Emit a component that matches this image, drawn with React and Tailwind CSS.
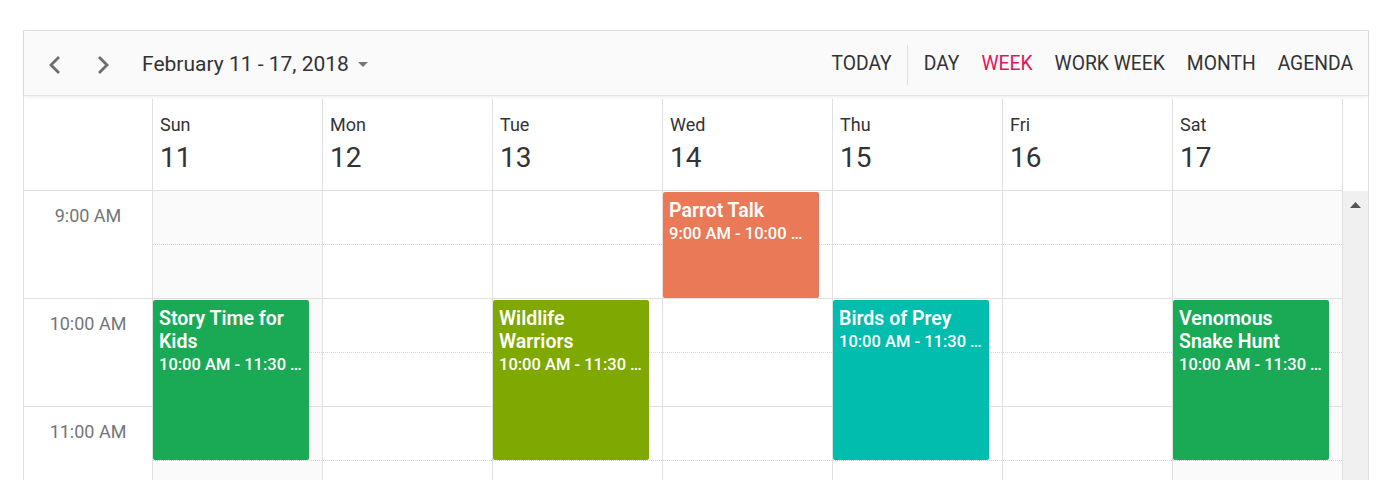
import React from "react";

const days = [
  { name: "Sun", date: "11", weekend: true },
  { name: "Mon", date: "12" },
  { name: "Tue", date: "13" },
  { name: "Wed", date: "14" },
  { name: "Thu", date: "15" },
  { name: "Fri", date: "16" },
  { name: "Sat", date: "17", weekend: true },
];

const events = {
  0: [{ title: "Story Time for Kids", time: "10:00 AM - 11:30 AM", start: 10, dur: 1.5, color: "bg-[#1aaa55]" }],
  2: [{ title: "Wildlife Warriors", time: "10:00 AM - 11:30 AM", start: 10, dur: 1.5, color: "bg-[#7fa900]" }],
  3: [{ title: "Parrot Talk", time: "9:00 AM - 10:00 AM", start: 9, dur: 1, color: "bg-[#ea7a57]" }],
  4: [{ title: "Birds of Prey", time: "10:00 AM - 11:30 AM", start: 10, dur: 1.5, color: "bg-[#00bdae]" }],
  6: [{ title: "Venomous Snake Hunt", time: "10:00 AM - 11:30 AM", start: 10, dur: 1.5, color: "bg-[#1aaa55]" }],
};

const hours = ["9:00 AM", "10:00 AM", "11:00 AM", "12:00 PM"];

function Chevron({ dir }) {
  return (
    <svg width="14" height="20" viewBox="0 0 14 20">
      <polyline
        points={dir === "left" ? "12,2 4,10 12,18" : "2,2 10,10 2,18"}
        fill="none"
        stroke="#6e6e6e"
        strokeWidth="2.8"
      />
    </svg>
  );
}

function Event({ ev }) {
  const top = 1 + (ev.start - 9) * 108;
  const height = ev.dur * 108 - 2;
  return (
    <div
      className={`absolute left-0 w-[156px] rounded-[2px] ${ev.color} text-white pl-[6px] pr-[6px] pt-[7px]`}
      style={{ top, height }}
    >
      <div className="text-[19.5px] leading-[23px] font-semibold">{ev.title}</div>
      <div className="text-[16.5px] leading-[23px] font-medium whitespace-nowrap overflow-hidden text-ellipsis">
        {ev.time}
      </div>
    </div>
  );
}

export default function App() {
  return (
    <div className="h-[480px] overflow-hidden bg-white pt-[30px] pl-[23px] font-['Roboto','Liberation_Sans',sans-serif] text-[#333]">
      <div className="w-[1346px] border border-[#e0e0e0]">
        {/* Toolbar */}
        <div className="relative z-10 h-[65px] pt-[3px] bg-[#fafafa] border-b border-[#e3e3e3] shadow-[0_1px_3px_rgba(0,0,0,0.08)] flex items-center justify-between">
          <div className="flex items-center pl-[10px]">
            <div className="w-[40px] h-[40px] flex items-center justify-center">
              <Chevron dir="left" />
            </div>
            <div className="ml-[10px] w-[40px] h-[40px] flex items-center justify-center">
              <Chevron dir="right" />
            </div>
            <div className="ml-[18px] text-[21px] text-[#333]">February 11 - 17, 2018</div>
            <svg className="ml-[9px]" width="10" height="5" viewBox="0 0 10 5">
              <polygon points="0,0 10,0 5,5" fill="#757575" />
            </svg>
          </div>
          <div className="flex items-center pr-[4px] text-[19.3px] text-[#333]">
            <div className="px-[11px]">TODAY</div>
            <div className="ml-[4px] mr-[5px] w-px h-[40px] bg-[#e0e0e0]" />
            <div className="px-[11px]">DAY</div>
            <div className="px-[11px] text-[#e3165b]">WEEK</div>
            <div className="px-[11px]">WORK WEEK</div>
            <div className="px-[11px]">MONTH</div>
            <div className="px-[11px]">AGENDA</div>
          </div>
        </div>

        {/* Header row */}
        <div className="flex pt-[3px] bg-white">
          <div className="flex border-b border-[#e0e0e0]">
            <div className="w-[128px]" />
            {days.map((d) => (
              <div key={d.name} className="w-[170px] h-[91px] border-l border-[#e0e0e0] pl-[7px] pt-[14px]">
                <div className="text-[18px] leading-[24px] text-[#333]">{d.name}</div>
                <div className="mt-[4px] text-[28px] leading-[34px] text-[#333]">{d.date}</div>
              </div>
            ))}
          </div>
          <div className="w-[26px] border-l border-[#e0e0e0]" />
        </div>

        {/* Body */}
        <div className="flex">
          <div className="w-[128px]">
            {hours.map((h) => (
              <div key={h} className="h-[108px] border-b border-[#e0e0e0] text-center pt-[13px] text-[18px] leading-[24px] text-[#757575]">
                {h}
              </div>
            ))}
          </div>
          {days.map((d, i) => (
            <div
              key={d.name}
              className={`relative w-[170px] border-l border-[#e0e0e0] ${d.weekend ? "bg-[#fafafa]" : "bg-white"}`}
            >
              {hours.map((h) => (
                <div key={h}>
                  <div className="h-[54px] border-b border-dotted border-[#d6d6d6]" />
                  <div className="h-[54px] border-b border-[#e0e0e0]" />
                </div>
              ))}
              {(events[i] || []).map((ev) => (
                <Event key={ev.title} ev={ev} />
              ))}
            </div>
          ))}
          <div className="w-[26px] bg-[#f0f0f0] border-l border-[#e0e0e0] flex justify-center pt-[11px]">
            <svg width="11" height="6" viewBox="0 0 11 6">
              <polygon points="0,6 11,6 5.5,0" fill="#555" />
            </svg>
          </div>
        </div>
      </div>
    </div>
  );
}
